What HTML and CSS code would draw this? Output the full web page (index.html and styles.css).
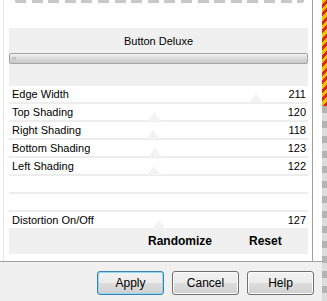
FILE: index.html
```html
<!DOCTYPE html>
<html>
<head>
<meta charset="utf-8">
<link rel="stylesheet" href="styles.css">
</head>
<body>
<div class="screen">
  <div class="window">
    <div class="top">
      <div class="lmargin"></div>
      <div class="lline"></div>
      <div class="lgap"></div>
      <div class="panel">
        <div class="dashes"></div>
        <div class="header">
          <div class="title">Button Deluxe</div>
          <div class="slider"><span class="grip"></span></div>
        </div>
        <div class="rows">
          <div class="row"><span class="label">Edge Width</span><span class="thumb" style="left:240px"></span><span class="val">211</span></div>
          <div class="row"><span class="label">Top Shading</span><span class="thumb" style="left:138px"></span><span class="val">120</span></div>
          <div class="row"><span class="label">Right Shading</span><span class="thumb" style="left:137px"></span><span class="val">118</span></div>
          <div class="row"><span class="label">Bottom Shading</span><span class="thumb" style="left:139px"></span><span class="val">123</span></div>
          <div class="row"><span class="label">Left Shading</span><span class="thumb" style="left:138px"></span><span class="val">122</span></div>
          <div class="row"></div>
          <div class="row"></div>
          <div class="row last"><span class="label">Distortion On/Off</span><span class="thumb" style="left:143px"></span><span class="val">127</span></div>
        </div>
        <div class="actions">
          <span class="act rand">Randomize</span>
          <span class="act reset">Reset</span>
        </div>
      </div>
      <div class="rgap"></div>
    </div>
    <div class="buttons">
      <button class="btn default">Apply</button>
      <button class="btn">Cancel</button>
      <button class="btn">Help</button>
    </div>
  </div>
  <div class="stripe">
    <div class="stripe-hot"></div>
    <div class="stripe-gray"></div>
  </div>
</div>
</body>
</html>
```

FILE: styles.css
```css
html, body {
  margin: 0;
  padding: 0;
}
body {
  width: 327px;
  height: 301px;
  overflow: hidden;
  background: #f0f0f0;
  font-family: "Liberation Sans", Arial, sans-serif;
  font-size: 11px;
  color: #000;
}
.screen {
  display: flex;
  width: 327px;
  height: 301px;
}
.window {
  width: 322px;
  display: flex;
  flex-direction: column;
  background: #f0f0f0;
}
.top {
  display: flex;
  height: 261px;
  border-bottom: 1px solid #a0a0a0;
  background: #ffffff;
}
.lmargin {
  width: 3px;
}
.lline {
  width: 1px;
  background: #e6e6e6;
}
.lgap {
  width: 5px;
}
.panel {
  width: 299px;
  display: flex;
  flex-direction: column;
}
.rgap {
  width: 4px;
  border-right: 1px solid #a0a0a0;
  margin-right: 9px;
}
.dashes {
  height: 3px;
  margin: 0 4px 25px 6px;
  background: repeating-linear-gradient(to right, #c8c8c8 0 11px, transparent 11px 16.6px);
  border-radius: 0 0 2px 2px;
}
.header {
  background: #f0f0f0;
  height: 58px;
  display: flex;
  flex-direction: column;
}
.title {
  height: 25px;
  line-height: 26px;
  text-align: center;
  font-size: 11px;
}
.slider {
  height: 9px;
  border: 1px solid #a4a4a4;
  border-radius: 2px;
  background: linear-gradient(#f6f6f6 0, #e2e2e2 30%, #d4d4d4 70%, #c8c8c8 100%);
  position: relative;
}
.grip {
  position: absolute;
  left: 2px;
  top: 3px;
  width: 4px;
  height: 3px;
  background: #c4c4c4;
}
.rows {
  display: flex;
  flex-direction: column;
}
.row {
  height: 16px;
  border-bottom: 2px solid #ededed;
  display: flex;
  align-items: center;
  justify-content: space-between;
  padding: 0 2px 0 3px;
  position: relative;
  line-height: 16px;
}
.row.last {
  border-bottom: none;
}
.thumb {
  position: absolute;
  bottom: -1px;
  width: 0;
  height: 0;
  border-left: 7px solid transparent;
  border-right: 7px solid transparent;
  border-bottom: 9px solid #f3f3f3;
}
.label, .val {
  position: relative;
}
.actions {
  background: #f0f0f0;
  height: 26px;
  display: flex;
  align-items: center;
  font-size: 12px;
  font-weight: bold;
  margin-bottom: 7px;
}
.rand {
  margin-left: 139px;
}
.reset {
  margin-left: 37px;
}
.buttons {
  flex: 1;
  display: flex;
  justify-content: flex-end;
  align-items: flex-start;
  gap: 8px;
  padding: 9px 8px 0 0;
}
.btn {
  width: 67px;
  height: 24px;
  padding: 0;
  font-family: "Liberation Sans", Arial, sans-serif;
  font-size: 12px;
  color: #000;
  border: 1px solid #707070;
  border-radius: 3px;
  background: linear-gradient(#f2f2f2 0, #ebebeb 50%, #dddddd 51%, #cfcfcf 100%);
  box-shadow: inset 0 0 0 1px #fbfbfb;
}
.btn.default {
  border-color: #3c7fb1;
  box-shadow: inset 0 0 0 1px #8edaf7;
}
.stripe {
  width: 5px;
  display: flex;
  flex-direction: column;
}
.stripe-hot {
  height: 106px;
  background: repeating-linear-gradient(135deg, #e8c400 0 3px, #d8281c 3px 6px);
}
.stripe-gray {
  flex: 1;
  background: repeating-linear-gradient(to bottom, #b4b4b4 0 7px, #dcdcdc 7px 15px);
}
```
